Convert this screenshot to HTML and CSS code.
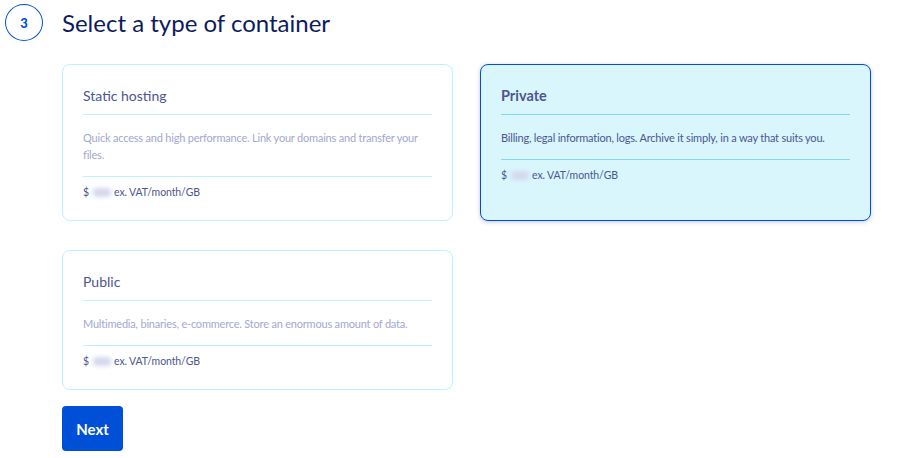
FILE: index.html
```html
<!DOCTYPE html>
<html lang="en">
<head>
<meta charset="utf-8">
<title>Select a type of container</title>
<link rel="stylesheet" href="styles.css">
</head>
<body>
<div class="step">
  <div class="step-head">
    <span class="step-num">3</span>
    <h1 class="step-title">Select a type of container</h1>
  </div>
  <div class="step-body">
    <div class="cards">
      <div class="card">
        <div class="card-title">Static hosting</div>
        <div class="card-desc">Quick access and high performance. Link your domains and transfer your files.</div>
        <div class="card-price">$ <span class="blur"></span> ex. VAT/month/GB</div>
      </div>
      <div class="card selected">
        <div class="card-title">Private</div>
        <div class="card-desc">Billing, legal information, logs. Archive it simply, in a way that suits you.</div>
        <div class="card-price">$ <span class="blur"></span> ex. VAT/month/GB</div>
      </div>
      <div class="card">
        <div class="card-title">Public</div>
        <div class="card-desc">Multimedia, binaries, e-commerce. Store an enormous amount of data.</div>
        <div class="card-price">$ <span class="blur"></span> ex. VAT/month/GB</div>
      </div>
    </div>
    <button class="btn-next">Next</button>
  </div>
</div>
</body>
</html>
```
FILE: styles.css
```css
* { box-sizing: border-box; }
body {
  margin: 0;
  background: #fff;
  font-family: Lato, "Noto Sans", sans-serif;
  color: #4d5592;
}
.step { padding: 4px 0 0 5px; }
.step-head {
  display: flex;
  align-items: center;
  gap: 19px;
}
.step-num {
  width: 38px;
  height: 37px;
  border: 1px solid #0050d7;
  border-radius: 50%;
  display: flex;
  align-items: center;
  justify-content: center;
  color: #0050d7;
  font-weight: 900;
  font-size: 13px;
}
.step-title {
  margin: 0;
  font-weight: 400;
  font-size: 24px;
  color: #0d1b5e;
  line-height: 32px;
}
.step-body { padding: 23px 0 0 57px; }
.cards {
  display: grid;
  grid-template-columns: 391px 391px;
  column-gap: 27px;
  row-gap: 29px;
  align-items: stretch;
}
.card {
  border: 1px solid #bef1ff;
  border-radius: 8px;
  padding: 21px 20px 19px 20px;
  background: #fff;
}
.card.selected {
  background: #d9f6fd;
  border-color: #0050d7;
  box-shadow: 0 1px 4px rgba(0, 40, 120, 0.25);
}
.card-title {
  font-size: 14px;
  line-height: 20px;
  padding-bottom: 8px;
  border-bottom: 1px solid #bef1ff;
  color: #4d5592;
}
.selected .card-title {
  font-weight: 700;
  font-size: 14.5px;
  border-bottom-color: #7fd8f8;
}
.card-desc {
  font-size: 11px;
  line-height: 17px;
  letter-spacing: -0.2px;
  color: #a4a7d2;
  padding: 14px 0 13px;
  border-bottom: 1px solid #bef1ff;
}
.selected .card-desc {
  color: #4d5592;
  border-bottom-color: #7fd8f8;
}
.card-price {
  font-size: 10.5px;
  line-height: 17px;
  letter-spacing: -0.1px;
  margin-top: 7px;
  color: #4d5592;
  display: flex;
  align-items: center;
}
.blur {
  display: inline-block;
  width: 18px;
  height: 9px;
  margin: 0 3px 0 4px;
  background: #d5d8ee;
  border-radius: 4px;
  filter: blur(2px);
}
.btn-next {
  margin-top: 16px;
  width: 61px;
  height: 45px;
  border: none;
  border-radius: 4px;
  background: #0050d7;
  color: #fff;
  font-family: inherit;
  font-weight: 700;
  font-size: 15px;
  padding: 0;
}
```
